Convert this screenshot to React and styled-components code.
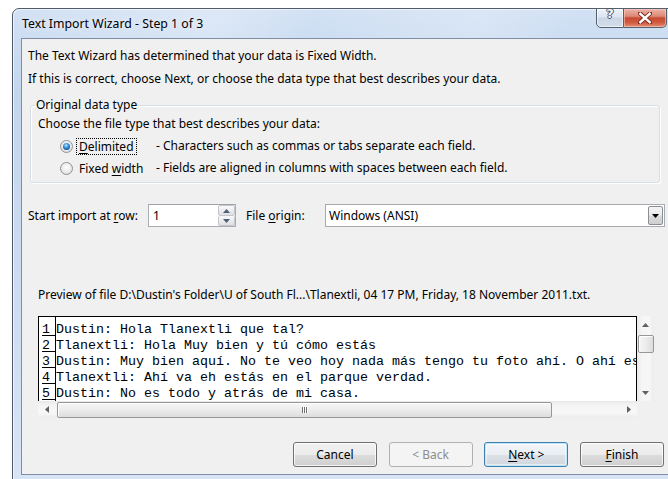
import React from 'react';
import styled, { createGlobalStyle, css } from 'styled-components';

const GlobalStyle = createGlobalStyle`
  html, body { margin: 0; padding: 0; background: #fff; overflow: hidden; }
  body { width: 668px; height: 479px; font-family: "Noto Sans", "Segoe UI", sans-serif; }
  * { box-sizing: border-box; }
`;

const UI_FONT = `"Noto Sans", "Segoe UI", sans-serif`;
const UI_SIZE = '12px';

const Screen = styled.div`
  width: 668px;
  height: 479px;
  overflow: hidden;
  padding: 8px 0 0 12px;
`;

const Window = styled.div`
  width: 666px;
  display: flex;
  flex-direction: column;
  border: 1px solid #505a6a;
  border-radius: 7px 7px 0 0;
  padding: 0 8px 6px 8px;
  background: linear-gradient(180deg, #d2e1f4 0%, #c3d6ee 18%, #cddcf1 60%, #d6e4f5 100%);
  box-shadow: inset 1px 1px 0 rgba(255, 255, 255, 0.6);
`;

const CaptionBar = styled.div`
  height: 29px;
  display: flex;
  align-items: flex-start;
  background: linear-gradient(100deg, transparent 0%, rgba(255,255,255,0.25) 30%, transparent 45%, rgba(255,255,255,0.2) 70%, transparent 85%);
`;

const Title = styled.div`
  flex: 1;
  padding: 7px 0 0 1px;
  font-family: ${UI_FONT};
  font-size: 12.3px;
  line-height: 16px;
  color: #000;
  text-shadow: 0 0 6px rgba(255, 255, 255, 0.9);
`;

const CaptionButtons = styled.div`
  display: flex;
  margin-top: -1px;
  margin-right: 2px;
`;

const CaptionButton = styled.div`
  width: ${p => p.$w}px;
  height: 20px;
  display: flex;
  justify-content: center;
  border: 1px solid #55606f;
  ${p => p.$close
    ? css`
      border-left: none;
      border-radius: 0 0 5px 0;
      align-items: center;
      background: linear-gradient(180deg, #eab3a6 0%, #dd8a77 40%, #c74a32 50%, #cf5b40 75%, #e48e73 100%);
      box-shadow: inset 0 0 0 1px rgba(255, 210, 200, 0.55);
    `
    : css`
      border-radius: 0 0 0 5px;
      align-items: flex-start;
      background: linear-gradient(180deg, #eef3fa 0%, #dbe4f0 45%, #c9d5e5 50%, #d3deec 100%);
      box-shadow: inset 0 0 0 1px rgba(255, 255, 255, 0.6);
    `}
`;

const HelpMark = styled.span`
  font-family: "DejaVu Sans", sans-serif;
  font-weight: bold;
  font-size: 13px;
  line-height: 13px;
  margin-top: -2px;
  color: #f4f6f9;
  text-shadow: -1px 0 #4a5566, 1px 0 #4a5566, 0 -1px #4a5566, 0 1px #4a5566;
`;

const Client = styled.div`
  display: flex;
  flex-direction: column;
  border: 1px solid #7f8ea4;
  background: #f0f0f0;
  padding: 9px 3px 7px 6px;
  font-family: ${UI_FONT};
  font-size: ${UI_SIZE};
  line-height: 16px;
  color: #000;
`;

const Line = styled.div`
  margin-top: ${p => p.$top || 0}px;
  white-space: nowrap;
`;

const Key = styled.span`
  text-decoration: underline;
  text-underline-offset: 2px;
`;

const Group = styled.fieldset`
  margin: 10px 5px 0 2px;
  padding: 0 0 3px 0;
  border: 1px solid #d5dfe5;
  border-radius: 3px;
  box-shadow: inset 1px 1px 0 #fff, 1px 1px 0 #fff;
  min-width: 0;
`;

const Legend = styled.legend`
  margin-left: 4px;
  padding: 0 1px;
  line-height: 16px;
`;

const GroupText = styled.div`
  margin: 3px 0 3px 7px;
  white-space: nowrap;
`;

const OptionRow = styled.div`
  height: 22px;
  display: grid;
  grid-template-columns: 13px 75px auto;
  column-gap: 4px;
  align-items: center;
  margin-left: 29px;
  white-space: nowrap;
`;

const Radio = styled.span`
  width: 13px;
  height: 13px;
  border-radius: 50%;
  border: 1px solid #8e9399;
  background: radial-gradient(circle at 50% 40%, #ffffff 0%, #eeeeee 45%, #d6d6d6 100%);
  display: flex;
  align-items: center;
  justify-content: center;
  &::after {
    content: '';
    display: ${p => (p.$checked ? 'block' : 'none')};
    width: 7px;
    height: 7px;
    border-radius: 50%;
    background: radial-gradient(circle at 45% 35%, #b7ecff 0%, #3a8fd6 40%, #12549c 75%, #0d3f78 100%);
  }
`;

const OptionLabel = styled.span`
  justify-self: start;
  padding: 0 2px;
  line-height: 15px;
  outline: ${p => (p.$focused ? '1px dotted #000' : 'none')};
  outline-offset: 0;
`;

const ImportRow = styled.div`
  margin-top: 21px;
  height: 23px;
  display: flex;
  align-items: center;
  white-space: nowrap;
`;

const FieldLabel = styled.span`
  width: ${p => p.$w}px;
  flex: none;
`;

const SpinBox = styled.div`
  width: 88px;
  height: 23px;
  display: flex;
  border: 1px solid #abadb3;
  border-top-color: #a0a3a9;
  background: #fff;
  margin-right: 10px;
`;

const SpinValue = styled.span`
  flex: 1;
  padding-left: 4px;
  line-height: 21px;
`;

const SpinButtons = styled.div`
  width: 17px;
  display: flex;
  flex-direction: column;
`;

const SpinButton = styled.div`
  flex: 1;
  display: flex;
  align-items: center;
  justify-content: center;
  border: 1px solid #c2c7ce;
  ${p => p.$down && 'border-top: none;'}
  border-radius: 2px;
  background: linear-gradient(180deg, #fbfbfb 0%, #ececec 50%, #e0e0e0 100%);
`;

const Combo = styled.div`
  flex: 1;
  height: 23px;
  display: flex;
  align-items: stretch;
  border: 1px solid #a7abb0;
  background: #fff;
`;

const ComboValue = styled.span`
  flex: 1;
  padding-left: 3px;
  line-height: 21px;
`;

const DropButton = styled.div`
  width: 15px;
  margin: 1px;
  display: flex;
  align-items: center;
  justify-content: center;
  border: 1px solid #8a8f96;
  border-radius: 2px;
  background: linear-gradient(180deg, #f4f4f4 0%, #e8e8e8 50%, #dadada 51%, #cfcfcf 100%);
`;

const PreviewLabel = styled.div`
  margin: 60px 0 0 10px;
  white-space: nowrap;
`;

const PreviewGrid = styled.div`
  margin: 13px 0 0 10px;
  display: grid;
  grid-template-columns: 599px 17px;
  grid-template-rows: 85px 17px;
`;

const TextPane = styled.div`
  border: 1px solid #000;
  border-bottom: none;
  background: #fff;
  overflow: hidden;
  display: flex;
  font-family: "Liberation Mono", "Courier New", monospace;
  font-size: 13.33px;
  line-height: 16px;
`;

const NumColumn = styled.div`
  width: 17px;
  flex: none;
  border-right: 1px solid #000;
  padding-top: 5px;
`;

const NumCell = styled.div`
  height: 16px;
`;

const Num = styled.span`
  display: block;
  margin-left: 3px;
  width: 13px;
  height: 14px;
  line-height: 16px;
  border-bottom: 1px solid #000;
`;

const TextColumn = styled.div`
  flex: 1;
  padding-top: 5px;
  white-space: pre;
  overflow: hidden;
`;

const TextRow = styled.div`
  height: 16px;
`;

const VScroll = styled.div`
  display: flex;
  flex-direction: column;
  background: linear-gradient(90deg, #e9e9e9 0%, #f5f5f5 30%, #f7f7f7 70%, #ececec 100%);
`;

const HScroll = styled.div`
  display: flex;
  background: linear-gradient(180deg, #e9e9e9 0%, #f5f5f5 30%, #f7f7f7 70%, #ececec 100%);
`;

const ArrowCell = styled.div`
  width: 17px;
  height: 17px;
  flex: none;
  display: flex;
  align-items: center;
  justify-content: center;
`;

const VTrack = styled.div`
  flex: 1;
  padding-top: 2px;
`;

const VThumb = styled.div`
  width: 16px;
  height: 18px;
  margin-left: 1px;
  border: 1px solid #979797;
  border-radius: 2px;
  background: linear-gradient(90deg, #f6f6f6 0%, #ececec 50%, #dcdcdc 100%);
  box-shadow: inset 1px 1px 0 #fff;
`;

const HTrack = styled.div`
  flex: 1;
  display: flex;
  align-items: center;
  padding-left: 2px;
`;

const HThumb = styled.div`
  height: 16px;
  border: 1px solid #979797;
  border-radius: 2px;
  background: linear-gradient(180deg, #f7f7f7 0%, #ececec 50%, #dddddd 100%);
  box-shadow: inset 1px 1px 0 #fff;
  display: flex;
  align-items: center;
  justify-content: center;
`;

const Grip = styled.div`
  display: flex;
  gap: 1px;
  span {
    width: 1px;
    height: 6px;
    background: #6e6e6e;
    box-shadow: 1px 0 0 #fff;
  }
`;

const Corner = styled.div`
  background: #f0f0f0;
`;

const ButtonRow = styled.div`
  margin-top: 24px;
  padding-right: 1px;
  display: flex;
  justify-content: flex-end;
  gap: 11.7px;
`;

const Button = styled.div`
  width: 84px;
  height: 25px;
  display: flex;
  align-items: center;
  justify-content: center;
  font-family: ${UI_FONT};
  font-size: ${UI_SIZE};
  color: #000;
  border: 1px solid #707070;
  border-radius: 3px;
  background: linear-gradient(180deg, #f2f2f2 0%, #ebebeb 50%, #dddddd 51%, #cfcfcf 100%);
  box-shadow: inset 0 0 0 1px rgba(255, 255, 255, 0.75);
  ${p => p.$default && css`
    border-color: #3c7fb1;
    box-shadow: inset 0 0 0 1px #bfe6fa, inset 0 0 0 2px rgba(255,255,255,0.5);
    background: linear-gradient(180deg, #f2f5f8 0%, #eaeef2 50%, #dce1e6 51%, #d0d6dc 100%);
  `}
  ${p => p.$disabled && css`
    border-color: #adb2b5;
    background: #f4f4f4;
    box-shadow: none;
    color: #8d8d8d;
  `}
`;

const Triangle = ({ dir, color = '#5a5a5a', size = 7 }) => {
  const pts = {
    up: '0,4 3.5,0 7,4',
    down: '0,0 7,0 3.5,4',
    left: '4,0 4,7 0,3.5',
    right: '0,0 0,7 4,3.5',
  }[dir];
  const vertical = dir === 'up' || dir === 'down';
  return (
    <svg
      width={vertical ? size : 4}
      height={vertical ? 4 : size}
      viewBox={vertical ? '0 0 7 4' : '0 0 4 7'}
    >
      <polygon points={pts} fill={color} />
    </svg>
  );
};

const CloseGlyph = () => (
  <svg width="14" height="12" viewBox="0 0 14 12">
    <path d="M2 1.5 L12 10.5 M12 1.5 L2 10.5" stroke="#7a2418" strokeWidth="4.2" strokeLinecap="square" />
    <path d="M2.3 1.8 L11.7 10.2 M11.7 1.8 L2.3 10.2" stroke="#fff" strokeWidth="2.4" strokeLinecap="square" />
  </svg>
);

const previewLines = [
  'Dustin: Hola Tlanextli que tal?',
  'Tlanextli: Hola Muy bien y tú cómo estás',
  'Dustin: Muy bien aquí. No te veo hoy nada más tengo tu foto ahí. O ahí es',
  'Tlanextli: Ahí va eh estás en el parque verdad.',
  'Dustin: No es todo y atrás de mi casa.',
];

export default function App() {
  return (
    <>
      <GlobalStyle />
      <Screen>
        <Window>
          <CaptionBar>
            <Title>Text Import Wizard - Step 1 of 3</Title>
            <CaptionButtons>
              <CaptionButton $w={28}>
                <HelpMark>?</HelpMark>
              </CaptionButton>
              <CaptionButton $w={43} $close>
                <CloseGlyph />
              </CaptionButton>
            </CaptionButtons>
          </CaptionBar>

          <Client>
            <Line>The Text Wizard has determined that your data is Fixed Width.</Line>
            <Line $top={7}>If this is correct, choose Next, or choose the data type that best describes your data.</Line>

            <Group>
              <Legend>Original data type</Legend>
              <GroupText>Choose the file type that best describes your data:</GroupText>
              <OptionRow>
                <Radio $checked />
                <OptionLabel $focused><Key>D</Key>elimited</OptionLabel>
                <span>- Characters such as commas or tabs separate each field.</span>
              </OptionRow>
              <OptionRow>
                <Radio />
                <OptionLabel>Fixed <Key>w</Key>idth</OptionLabel>
                <span>- Fields are aligned in columns with spaces between each field.</span>
              </OptionRow>
            </Group>

            <ImportRow>
              <FieldLabel $w={120}>Start import at <Key>r</Key>ow:</FieldLabel>
              <SpinBox>
                <SpinValue>1</SpinValue>
                <SpinButtons>
                  <SpinButton><Triangle dir="up" color="#4e5d78" size={7} /></SpinButton>
                  <SpinButton $down><Triangle dir="down" color="#4e5d78" size={7} /></SpinButton>
                </SpinButtons>
              </SpinBox>
              <FieldLabel $w={79}>File <Key>o</Key>rigin:</FieldLabel>
              <Combo>
                <ComboValue>Windows (ANSI)</ComboValue>
                <DropButton><Triangle dir="down" color="#000" /></DropButton>
              </Combo>
            </ImportRow>

            <PreviewLabel>
              {"Preview of file D:\\Dustin's Folder\\U of South Fl...\\Tlanextli, 04 17 PM, Friday, 18 November 2011.txt."}
            </PreviewLabel>

            <PreviewGrid>
              <TextPane>
                <NumColumn>
                  {previewLines.map((_, i) => (
                    <NumCell key={i}><Num>{i + 1}</Num></NumCell>
                  ))}
                </NumColumn>
                <TextColumn>
                  {previewLines.map((t, i) => (
                    <TextRow key={i}>{t}</TextRow>
                  ))}
                </TextColumn>
              </TextPane>
              <VScroll>
                <ArrowCell><Triangle dir="up" color="#606060" /></ArrowCell>
                <VTrack><VThumb /></VTrack>
                <ArrowCell><Triangle dir="down" color="#606060" /></ArrowCell>
              </VScroll>
              <HScroll>
                <ArrowCell><Triangle dir="left" color="#606060" /></ArrowCell>
                <HTrack>
                  <HThumb style={{ width: 495 }}>
                    <Grip><span /><span /><span /></Grip>
                  </HThumb>
                </HTrack>
                <ArrowCell><Triangle dir="right" color="#606060" /></ArrowCell>
              </HScroll>
              <Corner />
            </PreviewGrid>

            <ButtonRow>
              <Button>Cancel</Button>
              <Button $disabled>&lt; Back</Button>
              <Button $default><span><Key>N</Key>ext &gt;</span></Button>
              <Button><span><Key>F</Key>inish</span></Button>
            </ButtonRow>
          </Client>
        </Window>
      </Screen>
    </>
  );
}
